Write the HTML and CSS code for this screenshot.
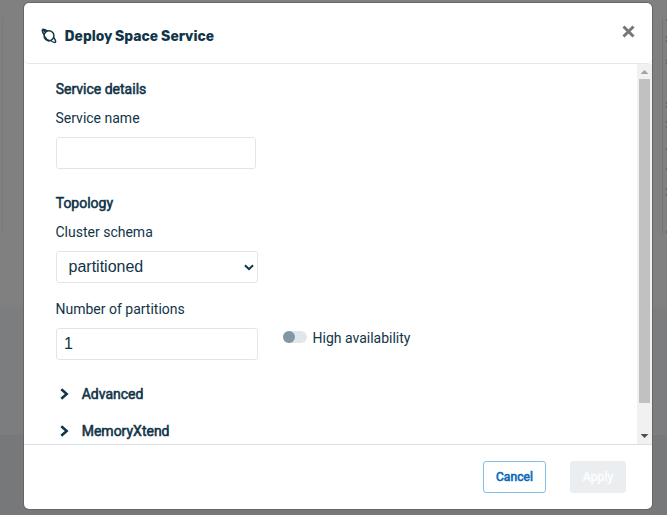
FILE: index.html
```html
<!DOCTYPE html>
<html lang="en">
<head>
<meta charset="utf-8">
<title>Deploy Space Service</title>
<link rel="stylesheet" href="styles.css">
</head>
<body>
<div class="backdrop" aria-hidden="true">
  <div class="page-top"></div>
  <div class="page-middle"></div>
  <div class="page-bottom"></div>
</div>
<div class="rule rule-left"></div>
<div class="rule rule-right"></div>
<svg class="specks" width="2" height="220" viewBox="0 0 2 220"><path d="M0 5h2M0 22h2M0 26h2M0 45h2M0 48h2M0 88h2M0 92h2M0 107h2M0 112h2M0 134h2M0 154h2M0 174h2M0 180h2M0 217h2"/></svg>
<main class="dialog" role="dialog">
  <header class="header">
    <svg class="planet" width="16" height="16" viewBox="0 0 16 16"><circle cx="8" cy="7.700" r="4.900"/><path d="M4.600 4.200L1.800 1.800M6.500 3C4 1.600 2 .9 1.500 1.600.9 2.400 1.900 4.900 3.400 7M3.400 8.500c1.500 2.500 3.500 4.300 5.300 4.500M9.500 12.500c2.500 1.700 4.300 2.300 4.900 1.700.6-.7-.2-2.700-1.700-4.900"/></svg>
    <h1 class="title">Deploy Space Service</h1>
    <button class="close" aria-label="Close"><svg width="13" height="13" viewBox="0 0 13 13"><path d="M1.500 1.500l10 10M11.500 1.500l-10 10"/></svg></button>
  </header>
  <div class="body">
    <form class="form">
      <h2 class="section">Service details</h2>
      <label class="label" for="name">Service name</label>
      <input class="field field-name" id="name" type="text">
      <h2 class="section">Topology</h2>
      <label class="label" for="schema">Cluster schema</label>
      <div class="field select" id="schema"><span>partitioned</span><svg width="10" height="7" viewBox="0 0 10 7"><path d="M1 1.200l4 4 4-4"/></svg></div>
      <label class="label label-count" for="count">Number of partitions</label>
      <div class="row">
        <input class="field field-count" id="count" type="text" value="1">
        <div class="switch"><span class="track"><span class="knob"></span></span><span>High availability</span></div>
      </div>
      <div class="expander first"><svg width="9" height="12" viewBox="0 0 9 12"><path d="M1.300 1.200L6.700 6l-5.400 4.800"/></svg><h2 class="section">Advanced</h2></div>
      <div class="expander"><svg width="9" height="12" viewBox="0 0 9 12"><path d="M1.300 1.200L6.700 6l-5.400 4.800"/></svg><h2 class="section">MemoryXtend</h2></div>
    </form>
    <div class="scrollbar">
      <span class="arrow up"></span>
      <span class="thumb"></span>
      <span class="arrow down"></span>
    </div>
  </div>
  <footer class="footer">
    <button class="button cancel">Cancel</button>
    <button class="button apply" disabled>Apply</button>
  </footer>
</main>
</body>
</html>
```
FILE: styles.css
```css
* { box-sizing: border-box; }
body {
  margin: 0;
  width: 667px;
  height: 515px;
  overflow: hidden;
  padding: 3px 15px 6px 24px;
  font: 14px/20px Roboto, sans-serif;
  color: #113448;
}
.backdrop {
  position: absolute;
  inset: 0;
  display: flex;
  flex-direction: column;
  background: #808080;
}
.page-top { height: 310px; background: linear-gradient(#808080 98%, #7b7c7c); }
.page-middle { height: 125px; background: #7c7d7f; }
.page-bottom { flex: 1; background: #77787a; }
.rule { position: absolute; top: 18px; width: 1px; height: 216px; background: #7a7a7b; }
.rule-left { left: 2px; }
.rule-right { left: 662px; background: #737478; }
.specks { position: absolute; left: 666px; top: 15px; fill: none; stroke: #6e5c60; stroke-width: 2; }
.dialog {
  position: relative;
  display: flex;
  flex-direction: column;
  width: 628px;
  height: 506px;
  background: #fff;
  border-radius: 5px;
  box-shadow: 0 0 0 1px #666668;
  overflow: hidden;
}
.header {
  display: flex;
  align-items: center;
  height: 61px;
  flex: none;
  padding: 4px 17px 0 17px;
  border-bottom: 1px solid #e5e7e9;
  border-radius: 5px;
}
.planet { margin-top: 1px; fill: none; stroke: #113448; stroke-width: 1.500; }
.title { margin: 4px auto 0 7.500px; font: 700 14px/20px Rubik, Inter, sans-serif; letter-spacing: .020px; }
.close { display: flex; margin: 0 0 8px; padding: 0; border: 0; background: none; }
.close svg { fill: none; stroke: #777; stroke-width: 3; }
.body { display: flex; height: 380px; flex: none; overflow: hidden; }
.form { flex: 1; padding: 15px 0 0 32px; }
.section { margin: 0 0 9px -0.300px; font-size: 14px; line-height: 20px; font-weight: 400; -webkit-text-stroke: .55px; }
.label { display: block; height: 20px; margin: 0 0 9px -0.500px; }
.field {
  display: block;
  width: 202px;
  height: 32px;
  border: 1px solid #e1e5e8;
  border-radius: 3px;
  background: #fff;
  color: #113448;
  font: 16px/30px "Liberation Sans", sans-serif;
  padding: 0 7px;
}
.field-name { width: 200px; margin-bottom: 24px; }
.select { display: flex; align-items: center; justify-content: space-between; padding: 0 3px 0 11.500px; margin-bottom: 16px; }
.select svg { fill: none; stroke: #113448; stroke-width: 2; }
.row { display: flex; }
.switch { display: flex; align-items: center; height: 20px; margin-left: 25px; }
.track { width: 24px; height: 12px; margin: -2px 5.500px 0 0; border-radius: 6px; background: #e1e6ea; }
.knob { display: block; width: 12px; height: 12px; border-radius: 50%; background: #8297a5; }
.expander { display: flex; align-items: center; height: 20px; padding-left: 4px; margin-top: 17px; }
.expander.first { margin-top: 24px; }
.expander svg { margin-right: 13px; fill: none; stroke: #113448; stroke-width: 2.500; }
.expander .section { margin: 0 0 0 -0.300px; }
.scrollbar { display: flex; flex-direction: column; align-items: center; width: 15px; background: #f1f1f1; }
.arrow { width: 8px; height: 4px; }
.up { margin: 6px 0 5px; background: #a3a3a3; clip-path: polygon(50% 0, 100% 100%, 0 100%); }
.thumb { width: 11px; height: 324px; background: #c1c1c1; }
.down { margin-top: 31px; background: #505050; clip-path: polygon(0 0, 100% 0, 50% 100%); }
.footer {
  display: flex;
  justify-content: flex-end;
  align-items: flex-start;
  gap: 24px;
  height: 65px;
  padding: 16px 26px 0;
  border-top: 1px solid #d8e0e6;
}
.button {
  height: 32px;
  padding: 0;
  border: 1px solid #83bfe8;
  border-radius: 3px;
  background: #fff;
  font: 400 12px/30px Roboto, sans-serif;
  letter-spacing: .1px;
  -webkit-text-stroke: .6px;
}
.cancel { width: 63px; color: #0868b8; }
.apply { width: 56px; border-color: #ebeef1; background: #ebeef1; color: #fcfdfd; }
```
